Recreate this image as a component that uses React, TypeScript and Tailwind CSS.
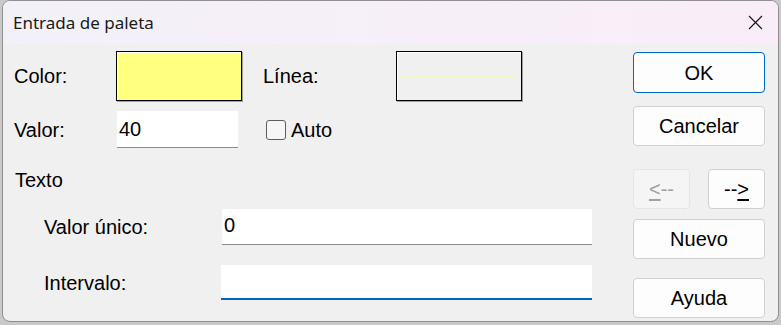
export default function App() {
  const arial = { fontFamily: '"Liberation Sans", Arial, sans-serif' };

  return (
    <div className="w-[781px] h-[325px] bg-[#c9c9c9] overflow-hidden" style={arial}>
      <div className="ml-[2px] w-[777px] h-[322px] rounded-[8px] border border-[#8f8f8f] bg-[#f0f0f0] overflow-hidden text-black">
        {/* TITLE BAR */}
        <div className="h-[43px] flex items-center justify-between bg-gradient-to-r from-[#f3f1f8] to-[#f9eef8]">
          <span
            className="pl-[10px] text-[17px] text-[#1a1a1a]"
            style={{ fontFamily: '"Noto Sans", "Open Sans", sans-serif' }}
          >
            Entrada de paleta
          </span>
          <svg className="mr-[15px]" width="15" height="15" viewBox="0 0 15 15" fill="none">
            <path d="M1 1L14 14M14 1L1 14" stroke="#1a1a1a" strokeWidth="1.2" />
          </svg>
        </div>

        {/* BODY */}
        <div className="flex">
          <div className="w-[630px] text-[20px]">
            {/* Color / Linea */}
            <div className="mt-[7px] h-[50px] flex items-center pl-[11px]">
              <span className="w-[102px]">Color:</span>
              <div className="w-[126px] h-[50px] border border-black bg-[#ffff80] shadow-[inset_1px_1px_0_#ffffff,1px_1px_0_#a0a0a0]" />
              <span className="ml-[21px] w-[133px]">Línea:</span>
              <div className="w-[126px] h-[50px] border border-black bg-[#f0f0f0] shadow-[inset_1px_1px_0_#ffffff,1px_1px_0_#a0a0a0] flex items-center pl-[4px] pr-[6px]">
                <div className="w-full h-px bg-[#f6f6c4]" />
              </div>
            </div>

            {/* Valor / Auto */}
            <div className="mt-[10px] h-[37px] flex items-center pl-[11px]">
              <span className="w-[103px]">Valor:</span>
              <div className="w-[121px] h-[37px] bg-white border-b border-[#8a8a8a] flex items-center pl-[2px]">
                40
              </div>
              <div className="ml-[28px] w-[20px] h-[20px] rounded-[3px] border border-[#5c5c5c] bg-[#f6f6f6]" />
              <span className="ml-[5px]">Auto</span>
            </div>

            {/* Texto */}
            <div className="mt-[22px] h-[20px] leading-[20px] pl-[12px]">Texto</div>

            <div className="mt-[19px] h-[36px] flex items-center pl-[41px]">
              <span className="w-[178px]">Valor único:</span>
              <div className="w-[370px] h-[36px] bg-white border-b border-[#8a8a8a] flex items-center pl-[2px] pb-[3px]">
                0
              </div>
            </div>

            <div className="mt-[20px] h-[35px] flex items-center pl-[41px]">
              <span className="w-[177px]">Intervalo:</span>
              <div className="w-[371px] h-[35px] bg-white border-b-2 border-[#0067c0]" />
            </div>
          </div>

          {/* BUTTONS */}
          <div className="w-[132px] flex flex-col text-[20px]">
            <button className="mt-[8px] h-[41px] rounded-[4px] border border-[#0067c0] bg-[#fdfdfd]">
              OK
            </button>
            <button className="mt-[13px] h-[40px] rounded-[4px] border border-[#d0d0d0] bg-[#fdfdfd]">
              Cancelar
            </button>
            <div className="mt-[23px] h-[40px] flex justify-between">
              <button className="w-[57px] h-[40px] rounded-[4px] border border-[#e5e5e5] bg-[#f5f5f5] text-[#a0a0a0]">
                <span className="underline underline-offset-[3px]">&lt;</span>--
              </button>
              <button className="w-[57px] h-[40px] rounded-[4px] border border-[#d0d0d0] bg-[#fdfdfd]">
                --<span className="underline underline-offset-[3px]">&gt;</span>
              </button>
            </div>
            <button className="mt-[10px] h-[40px] rounded-[4px] border border-[#d0d0d0] bg-[#fdfdfd]">
              Nuevo
            </button>
            <button className="mt-[19px] h-[40px] rounded-[4px] border border-[#d0d0d0] bg-[#fdfdfd]">
              Ayuda
            </button>
          </div>
        </div>
      </div>
    </div>
  );
}
